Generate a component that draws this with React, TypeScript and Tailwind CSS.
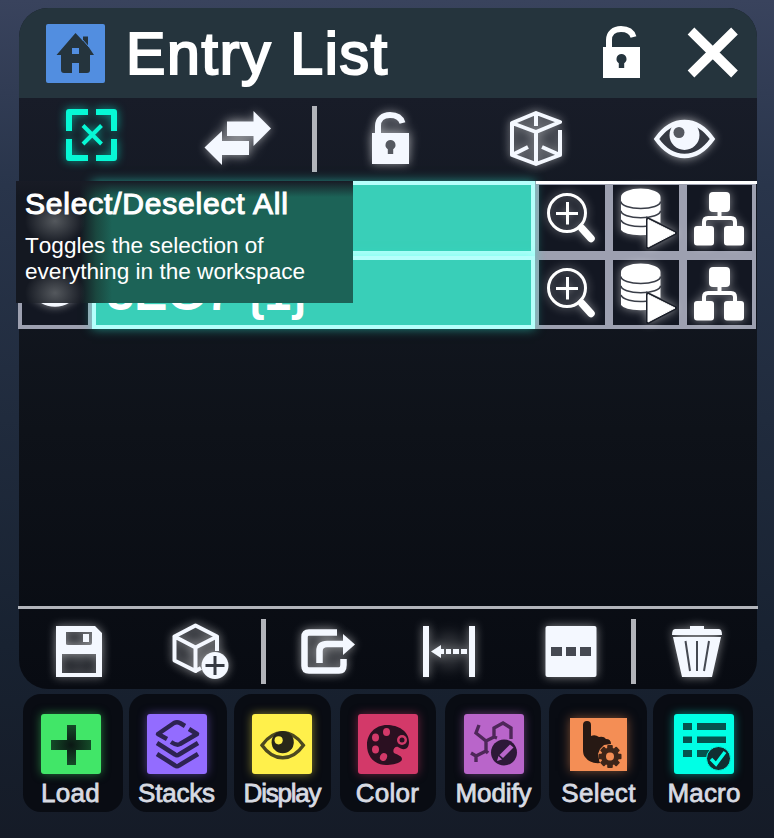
import type { ReactNode } from "react";

const W = "#f4f8ff";

/* Toolbar cell: the drawing's coordinates follow the panel's own grid. */
function Cell({ box, className, children, color = W }: { box: string; className: string; children: ReactNode; color?: string }) {
  return (
    <button className={`shrink-0 ${className}`}>
      <svg viewBox={box} className="block h-full w-full overflow-visible" fill={color} stroke="none" color={color}>
        {children}
      </svg>
    </button>
  );
}

const glow = "drop-shadow-[0_0_5px_rgba(255,255,255,0.5)]";

function Halo({ cx, cy, r, o = 0.25 }: { cx: number; cy: number; r: number; o?: number }) {
  return <circle cx={cx} cy={cy} r={r} fill="white" opacity={o} className="blur-[7px]" />;
}

function LockShape({ hole }: { hole: string }) {
  return (
    <>
      <path d="M0 21H37V52H0Z" />
      <path d="M18.500 28A5 5 0 0 0 15.800 37.200V42H21.200V37.200A5 5 0 0 0 18.500 28Z" fill={hole} />
      <path d="M6 23V14C6 7 11 3 18 3C25 3 29 6 30.500 11" fill="none" stroke="currentColor" strokeWidth="6" />
    </>
  );
}

function Magnifier() {
  return (
    <g className={glow}>
      <circle cx="32" cy="32" r="18.500" fill="none" stroke="white" strokeWidth="3" />
      <path d="M21 32.500H43M32.500 21V43.500" stroke="white" strokeWidth="3" fill="none" />
      <path d="M47 47.500L56 57.500" stroke="white" strokeWidth="7.500" strokeLinecap="round" fill="none" />
      <path d="M44 44L50 50" stroke="white" strokeWidth="4" />
    </g>
  );
}

function DatabasePlay() {
  return (
    <g className={glow} fill="white">
      <path d="M12 16A19.750 8.500 0 0 1 51.500 16V42L37 35V54Q16 55 12 49Z" />
      <path d="M12 20.500A19.750 7 0 0 0 51.500 20.500M12 29.700A19.750 7 0 0 0 51.500 29.700M12 38.900A19.750 7 0 0 0 37 45.200" fill="none" stroke="#3a3e48" strokeWidth="1.600" />
      <path d="M39 38.500L66 52L39 66Z" stroke="#1b1f29" strokeWidth="4" strokeLinejoin="round" />
      <path d="M39 38.500L66 52L39 66Z" stroke="white" strokeWidth="1" strokeLinejoin="round" />
    </g>
  );
}

function Tree() {
  return (
    <g className={glow} fill="white">
      <rect x="26" y="11" width="21" height="20" rx="4" />
      <rect x="11" y="45" width="20" height="19.500" rx="3" />
      <rect x="41" y="45" width="20" height="19.500" rx="3" />
      <path d="M21 46V41Q21 37 25 37H48Q52 37 52 41V46M36.500 30V38" fill="none" stroke="white" strokeWidth="4" />
    </g>
  );
}

function EyeShape({ dark, iris, shine }: { dark: string; iris: string; shine: string }) {
  return (
    <>
      <path d="M2 20.500Q14 3.500 30 3.500T58 20.500Q46 37.500 30 37.500T2 20.500Z" fill={dark} stroke="currentColor" strokeWidth="4.500" />
      <circle cx="30" cy="16.500" r="15" fill={iris} />
      <circle cx="24.500" cy="14" r="5.500" fill={shine} />
    </>
  );
}

function Row({ tall, label }: { tall: boolean; label?: string }) {
  const h = tall ? "h-[75px] border-b-[5px]" : "h-[73px]";
  const cell = `border-4 border-[#9da0b0] bg-[#131722] ${h}`;
  return (
    <div className="flex w-[738px]">
      <div className={`w-[74px] ${cell}`}>
        <svg viewBox="0 0 66 66" className="h-[66px] w-[66px]" color={W}>
          <g transform="translate(6 11) scale(.9)" className={glow}><EyeShape dark="#333741" iris={W} shine="#333741" /></g>
        </svg>
      </div>
      <div className={`relative z-10 w-[443px] border-4 border-[#b5fffb] bg-[#39cfb8] shadow-[0_0_10px_rgba(50,255,225,0.5)] ${h}`}>
        <span className="block pl-[11px] text-[48px] leading-[66px] tracking-[0.9px] text-white [-webkit-text-stroke:2px_white]">{label}</span>
      </div>
      {[<Magnifier />, <DatabasePlay />, <Tree />].map((icon, i) => (
        <div key={i} className={`${i === 2 ? "w-[73px]" : "w-[74px]"} ${cell}`}>
          <svg viewBox="4 4 66 66" className="block h-[66px] w-[66px] overflow-visible">{icon}</svg>
        </div>
      ))}
    </div>
  );
}

function Separator({ className }: { className: string }) {
  return <div className={`w-[5px] shrink-0 bg-[#b2b4ba] ${className}`} />;
}

const docks: { label: string; card: string; tile: string; text: string; art: ReactNode }[] = [
  {
    label: "Load", card: "w-[100px] pr-[4px]", tile: "bg-[#41e668] shadow-[0_0_10px_#41e66880]", text: "tracking-[0.3px]",
    art: <><defs><radialGradient id="plus"><stop offset="0" stopColor="#0b1714" /><stop offset="1" stopColor="#144b28" /></radialGradient></defs>
      <path d="M26 11H35V26H50V36H35V51H26V36H10V26H26Z" fill="url(#plus)" /></>,
  },
  {
    label: "Stacks", card: "w-[98px] pr-[2px]", tile: "bg-[#936cff] shadow-[0_0_10px_#936cff80]", text: "tracking-[-0.2px]",
    art: <g fill="none" stroke="#2d2352" strokeWidth="4.500" strokeLinejoin="round">
      <path d="M20 25L11 20L27 9Q30 7.500 33 9L38 12" /><path d="M42 15L50 20L33 30Q30 32 24 28" />
      <path d="M10 29L28 40.500Q30 42 32 40.500L51 29M10 40L28 51.500Q30 53 32 51.500L51 40" /></g>,
  },
  {
    label: "Display", card: "w-[97px] pr-[1px]", tile: "bg-[#fff04b] shadow-[0_0_10px_#fff04b80]", text: "tracking-[-1.2px]",
    art: <g transform="translate(8.500 16) scale(.74)" color="#4d4920"><EyeShape dark="#fff04b" iris="#292719" shine="#fff04b" /></g>,
  },
  {
    label: "Color", card: "w-[96px]", tile: "bg-[#d33969] shadow-[0_0_10px_#d3396980]", text: "tracking-[0.3px]",
    art: <><path d="M29 11C17 11 9 20 9 31C9 43 17 51 28 51C35 51 44 49 44 45C44 42 40 41 36 39C34 36 37 32 40 33C44 36 51 37 51 28C51 17 40 11 29 11Z" fill="#2b1021" />
      <g fill="#d33969"><ellipse cx="28.500" cy="18" rx="3.500" ry="4" /><ellipse cx="17.500" cy="23.500" rx="3.500" ry="4" /><ellipse cx="17.500" cy="35.500" rx="3.500" ry="4" /><ellipse cx="25.500" cy="43" rx="3.500" ry="4" transform="rotate(25 25.500 43)" /><circle cx="44" cy="26" r="5" /></g>
      <circle cx="44" cy="26" r="2.500" fill="#2b1021" /></>,
  },
  {
    label: "Modify", card: "w-[96px] pl-[2px]", tile: "bg-[#b965ca] shadow-[0_0_10px_#b965ca80]", text: "tracking-[-0.1px]",
    art: <><path d="M15 11L12 19L22 27V37L12 42L7 39M12 42V48M22 27L30 23V14L39 9L47 14V25M22 37L24 39M30 23L33 24" fill="none" stroke="#4e2759" strokeWidth="3.400" />
      <circle cx="40" cy="38.500" r="13" fill="#2d1938" />
      <path d="M35.500 41L46 30.500L49.500 33.500L39 44Z" fill="#b965ca" /><path d="M34.500 42L38 45.500L33 47Z" fill="#b965ca" /></>,
  },
  {
    label: "Select", card: "w-[98px] pl-[2px]", tile: "bg-[#f48e55] shadow-[0_0_10px_#f48e5580] !h-[53px] !w-[57px] !rounded-none", text: "tracking-[0.4px]",
    art: <><path d="M13 7Q13 3 17 3T21 7V18Q25 16 29 19Q34 18 36 21Q41 21 41 26L34 27L30 31L28 36L30 45Q20 46 15 39Q13 37 13 32Z" fill="#271914" />
      <g transform="translate(40 38.500)"><circle r="8" fill="#3e2519" stroke="#f48e55" strokeWidth="7" /><circle r="6.500" fill="none" stroke="#3e2519" strokeWidth="5" />
        {[0, 45, 90, 135, 180, 225, 270, 315].map((a) => <rect key={a} x="-2.800" y="-11.500" width="5.600" height="5" rx="1" fill="#3e2519" transform={`rotate(${a})`} />)}
        <circle r="4" fill="#f48e55" /></g></>,
  },
  {
    label: "Macro", card: "w-[100px] pl-[3px]", tile: "bg-[#00ffe5] shadow-[0_0_10px_#00ffe580]", text: "tracking-[0.2px]",
    art: <><path d="M9 9H18V16H9ZM23 9H52V16H23ZM9 22.500H18V29H9ZM23 22.500H52V29H23ZM9 36H18V43H9ZM23 36H40V43H23Z" fill="#05544f" />
      <circle cx="44.500" cy="44.500" r="12" fill="#102e31" stroke="#00ffe5" strokeWidth="1" />
      <path d="M37 45L42 50L51 38" fill="none" stroke="#00ffe5" strokeWidth="3.500" /></>,
  },
];

export default function App() {
  return (
    <main className="h-[838px] w-[774px] overflow-hidden bg-[linear-gradient(#39435d,#29354b_22%,#202b3d_50%,#182231_77%,#151b27)] pt-2 font-['Liberation_Sans',sans-serif]">
      <section className="relative ml-[19px] flex h-[681px] w-[738px] flex-col rounded-[29px] bg-[linear-gradient(#181c28_13%,#141923_30%,#0e1219_62%,#080b12)]">
        <header className="flex h-[90px] shrink-0 items-start rounded-t-[29px] bg-[#25343d]">
          <svg viewBox="0 0 59 59" className="mt-4 ml-[27px] h-[59px] w-[59px] rounded-[2px] bg-[#528ee0]" fill="#25343d">
            <path fillRule="evenodd" d="M29.500 9L37 17V12.500H42V22L48 31H44V46Q44 49 41 49H33V39H26V49H18Q15 49 15 46V31H10.500ZM26 24H33V30H26Z" />
            <path d="M36 15L43 23" stroke="#528ee0" strokeWidth="1" />
          </svg>
          <h1 className="ml-[21px] w-[459px] pt-[11px] text-[59px] leading-[70px] tracking-[1.7px] text-white [-webkit-text-stroke:2.2px_white]">Entry List</h1>
          <svg viewBox="0 0 150 60" className="-ml-[1px] mt-[18px] h-[60px] w-[150px] shrink-0 overflow-visible" fill="white" color="white">
            <g transform="translate(19)"><LockShape hole="#25343d" /></g>
            <path d="M107 5L150.500 48M150.500 5L107 48" fill="none" stroke="white" strokeWidth="9.500" />
          </svg>
        </header>
        <nav className="flex h-[83px] shrink-0">
          <Cell box="19 98 146 83" className="h-[83px] w-[146px]">
            <g className="drop-shadow-[0_0_5px_rgba(0,255,220,0.6)]" fill="none" stroke="#07f8d5" strokeWidth="6">
              <path d="M69 131V112H88M96 112H114V131M114 139V158H96M88 158H69V139" strokeLinejoin="round" />
              <path d="M83 125.500L101.500 144M101.500 125.500L83 144" strokeWidth="4" />
            </g>
          </Cell>
          <Cell box="165 98 146 83" className="h-[83px] w-[146px]">
            <Halo cx={238} cy={138} r={18} />
            <path className={glow} d="M227 121.500H253.500V111L271 128.500L253.500 146V136H227ZM249 141V155H222V165L204.500 147.500L222 131V141Z" />
          </Cell>
          <Separator className="mx-px mt-2 h-[66px]" />
          <Cell box="318 98 146 83" className="h-[83px] w-[146px]">
            <Halo cx={391} cy={140} r={18} /><g transform="translate(372 112)" className={glow}><LockShape hole="#555961" /></g>
          </Cell>
          <Cell box="464 98 146 83" className="h-[83px] w-[146px]">
            <Halo cx={536} cy={139} r={22} o={0.2} />
            <g className={glow} fill="none" stroke={W} strokeWidth="4" strokeLinejoin="round">
              <path d="M512 123L536 113L560 122L536 132ZM512 123V155L536 164L560 155V130M536 132V164M536 114V126M512 155L528 147M560 155L542 147" />
            </g>
          </Cell>
          <Cell box="610 98 146 83" className="h-[83px] w-[146px]">
            <Halo cx={684} cy={139} r={18} />
            <g transform="translate(654.500 118.500)" className={glow}><EyeShape dark="#343842" iris={W} shine="#555961" /></g>
          </Cell>
        </nav>
        <div className="relative -ml-px h-[425px] w-[739px] shrink-0">
          <Row tall />
          <Row tall={false} label="3EG7 {1}" />
          <div className="absolute top-0 left-[518px] z-10 h-[3px] w-[221px] bg-white" />
          <div className="absolute top-0 -left-[2px] z-20 h-[122px] w-[337px] bg-[linear-gradient(#181b25_0px,#181b2500_16px),radial-gradient(ellipse_30px_24px_at_39px_40px,#54585d,#54585d00),radial-gradient(ellipse_30px_24px_at_39px_112px,#54585d,#54585d00),linear-gradient(90deg,#141821_64px,#1a473f_80px,#1c6357_96px)] px-[9px] pt-[8px] text-white">
            <h2 className="text-[30px] leading-[30px] tracking-[0.8px] [-webkit-text-stroke:1.1px_white]">Select/Deselect All</h2>
            <p className="mt-[14px] text-[22.6px] leading-[26px] whitespace-nowrap [font-kerning:none]">Toggles the selection of<br />everything in the workspace</p>
          </div>
        </div>
        <footer className="-ml-px flex h-[83px] w-[740px] shrink-0 border-t-[3px] border-[#b2b4ba] pl-px">
          <Cell box="19 609 121 80" className="h-20 w-[121px]">
            <Halo cx={79} cy={651} r={20} o={0.2} />
            <path className={glow} fillRule="evenodd" d="M56 626H95L102 633V677H56ZM62 654V673H96V654ZM66 632V644Q66 645 68 645H90Q92 645 92 643V632ZM83 634H89V642H83Z" />
          </Cell>
          <Cell box="140 609 121 80" className="h-20 w-[121px]">
            <Halo cx={199} cy={651} r={20} />
            <g className={glow}>
              <path d="M174.500 636.500L195.500 625.500L217 636.500L195.500 647.500ZM174.500 636.500V660.500L195.500 671V648M217 636.500V651M195.500 671L201 668" fill="none" stroke={W} strokeWidth="4" strokeLinejoin="round" />
              <circle cx="215" cy="665.500" r="13.500" /><path d="M205.500 665.500H224.500M215 656V675" stroke="#353942" strokeWidth="3" />
            </g>
          </Cell>
          <Separator className="mr-px mt-[10px] h-[65px]" />
          <Cell box="267 609 121 80" className="h-20 w-[121px]">
            <Halo cx={326} cy={651} r={19} />
            <g className={glow} fill="none" stroke={W} strokeWidth="6.500">
              <path d="M337 632.500H309Q304.500 632.500 304.500 637V666Q304.500 670.500 309 670.500H339Q343.500 670.500 343.500 665V659" />
              <path d="M319.500 663V651Q319.500 644 327 644H344" /><path d="M343 634L355 644.500L343 655Z" fill={W} stroke="none" />
            </g>
          </Cell>
          <Cell box="388 609 121 80" className="h-20 w-[121px]">
            <Halo cx={449} cy={651} r={18} o={0.16} />
            <path className={glow} d="M423 626H429V677H423ZM469 626H475V677H469ZM431 651.500L441 645V649H444V654H441V658ZM446 649H451V654H446ZM453 649H459V654H453ZM461 649H467V654H461Z" />
          </Cell>
          <Cell box="509 609 121 80" className="h-20 w-[121px]">
            <rect x="545.500" y="626" width="51" height="51" rx="2" className={glow} />
            <path d="M551 647H562V656H551ZM566 647H576V656H566ZM580 647H591V656H580Z" fill="#454952" />
          </Cell>
          <Separator className="ml-px mt-[10px] h-[65px]" />
          <Cell box="636 609 121 80" className="h-20 w-[121px]">
            <g className={glow}>
              <path d="M690 626H704V629H719Q722 629 722 635H672Q672 629 675 629H690ZM673 637H721L712 677H682Z" />
              <path d="M685.500 641L690 671M697 641V671M709 641L704 671" stroke="#454952" strokeWidth="2" />
            </g>
          </Cell>
        </footer>
      </section>
      <nav className="mt-[5px] ml-[20px] grid w-[735px] grid-cols-[repeat(7,105px)] justify-items-center">
        {docks.map((d) => (
          <button key={d.label} className={`flex h-[118px] flex-col items-center rounded-[18px] bg-[#090c13] ${d.card}`}>
            <span className="mt-5 flex h-[60px] items-center">
              <svg viewBox={d.label === "Select" ? "0 0 57 53" : "0 0 60 60"} className={`block h-[60px] w-[60px] rounded-[3px] ${d.tile}`}>{d.art}</svg>
            </span>
            <span className={`mt-1 text-[26px] leading-[30px] text-[#d7dae2] [-webkit-text-stroke:0.8px_#d7dae2] ${d.text}`}>{d.label}</span>
          </button>
        ))}
      </nav>
    </main>
  );
}
